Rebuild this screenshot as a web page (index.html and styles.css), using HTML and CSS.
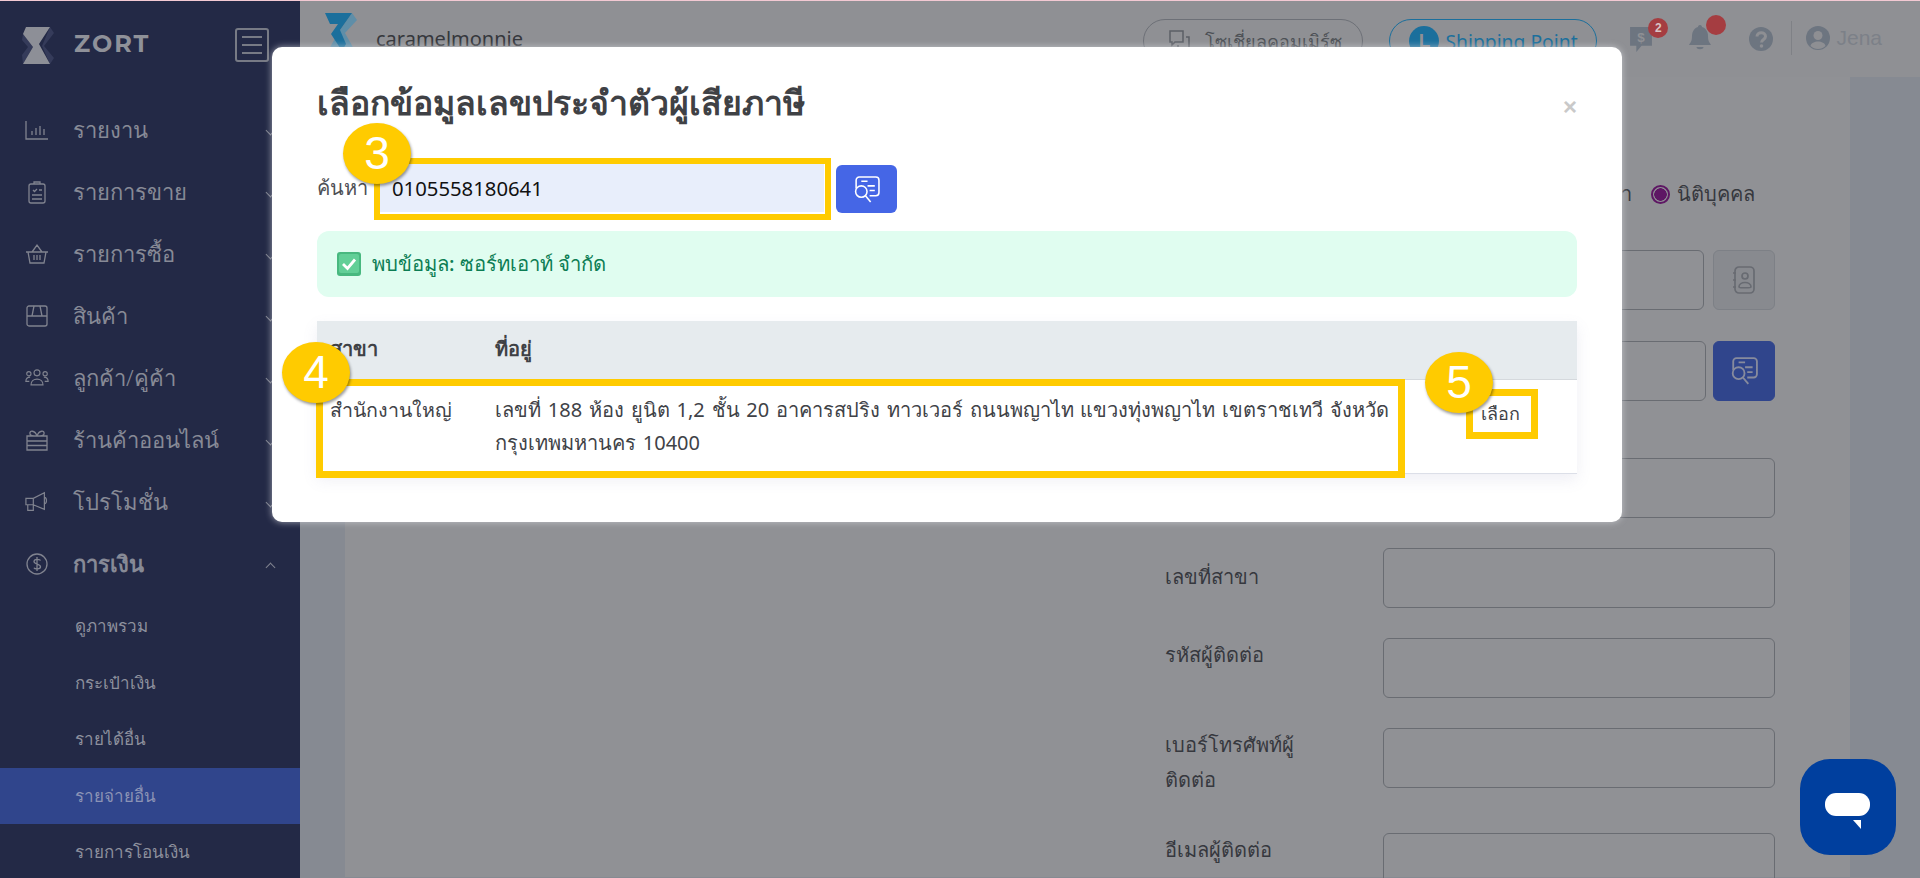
FILE: index.html
```html
<!DOCTYPE html>
<html lang="th">
<head>
<meta charset="utf-8">
<title>ZORT</title>
<link rel="stylesheet" href="styles.css">
</head>
<body>
<div class="app">
  <aside class="sidebar">
    <div class="brand">
      <svg class="brand-logo" viewBox="0 0 33 37"><path fill="#353b5a" d="M28 0l4 6-10 13 10 12-4 6-8-18zM1 7l-1 6 6 7-6 8 1 9 10-17z"/><path fill="#8d8f97" d="M4 0h24L17 17l11 20H1l10-17L1 7z"/></svg>
      <span class="brand-name">ZORT</span>
      <span class="burger"><i></i><i></i><i></i></span>
    </div>
    <nav class="nav">
      <a class="nav-item"><svg viewBox="0 0 24 24"><path d="M1 3v18h22M7 17v-4M11 17v-7M15 17v-9M19 17v-6"/></svg><span>รายงาน</span><b class="chev"></b></a>
      <a class="nav-item"><svg viewBox="0 0 24 24"><rect x="4" y="4" width="16" height="19" rx="2"/><path d="M9 4V2h6v2M8 10l1.500 1.500L12 9M14 10h3M7 15h10M7 19h10"/></svg><span>รายการขาย</span><b class="chev"></b></a>
      <a class="nav-item"><svg viewBox="0 0 24 24"><path d="M1 10h22M3 10l2 11h14l2-11M7 10l5-7 5 7M9 13v5M12 13v5M15 13v5"/></svg><span>รายการซื้อ</span><b class="chev"></b></a>
      <a class="nav-item"><svg viewBox="0 0 24 24"><rect x="2" y="2" width="20" height="20" rx="2"/><path d="M2 12h20M7 12l2-10M17 12l-2-10"/></svg><span>สินค้า</span><b class="chev"></b></a>
      <a class="nav-item"><svg viewBox="0 0 28 24"><circle cx="14" cy="6" r="3.500"/><circle cx="4.500" cy="7" r="2.500"/><circle cx="23.500" cy="7" r="2.500"/><path d="M7 20c0-9 14-9 14 0zM5 16H1c0-4 2-5 5-5M23 16h4c0-4-2-5-5-5"/></svg><span>ลูกค้า/คู่ค้า</span><b class="chev"></b></a>
      <a class="nav-item"><svg viewBox="0 0 24 24"><path d="M2 8h20v14H2zM2 13h20M2 17.500h20M12 8c-2-6-8-6-7-2 0 2 4 2 7 2zM12 8c2-6 8-6 7-2 0 2-4 2-7 2z"/></svg><span>ร้านค้าออนไลน์</span><b class="chev"></b></a>
      <a class="nav-item"><svg viewBox="0 0 26 24"><path d="M1 8h8l12-6v18L9 15H1zM9 8v7M3 15v6h6v-6M21 7c3 0 3 7 0 7"/></svg><span>โปรโมชั่น</span><b class="chev"></b></a>
      <a class="nav-item nav-open"><svg viewBox="0 0 24 24"><circle cx="12" cy="12" r="10"/><path d="M15.500 8.500C15 7 9 6.500 9 9.500c0 3.200 6.500 2 6.500 5.200 0 3-6 2.500-6.500 1M12 5v14"/></svg><span>การเงิน</span><b class="chev chev-up"></b></a>
      <a class="sub-item">ดูภาพรวม</a>
      <a class="sub-item">กระเป๋าเงิน</a>
      <a class="sub-item">รายได้อื่น</a>
      <a class="sub-item sub-active">รายจ่ายอื่น</a>
      <a class="sub-item">รายการโอนเงิน</a>
    </nav>
  </aside>

  <div class="main">
    <header class="topbar">
      <svg class="shop-logo" viewBox="0 0 32 38"><path fill="#5f8ea8" d="M27 0l5 7-12 13 10 18H3l10-18z"/><path fill="#1b6f9c" d="M0 0h27L15 17l6 14-4 7-11-17 7-10H5z"/></svg>
      <span class="shop-name">caramelmonnie</span>
      <span class="pill pill-social"><svg viewBox="0 0 24 24"><path d="M3 2h13v11H8l-3 3v-3H3zM19 8h3v11h-2v3l-3-3h-6v-3"/></svg>โซเชี่ยลคอมเมิร์ซ</span>
      <span class="pill pill-ship"><i class="ship-mark">L</i>Shipping Point</span>
      <span class="tool tool-msg"><svg viewBox="0 0 24 26"><path fill="#6d7580" d="M2 1h21v18H13l-5 6v-6H2z"/><text x="12.500" y="15" class="msg-sign">$</text></svg><em class="badge">2</em></span>
      <span class="tool tool-bell"><svg viewBox="0 0 24 28"><path fill="#6d7580" d="M12 0c1.500 0 2 1 2 2 4 1 6 5 6 9 0 6 2 7 3 9H1c1-2 3-3 3-9 0-4 2-8 6-9 0-1 .5-2 2-2zM8.500 22h7c0 3-7 3-7 0z"/></svg><em class="badge badge-dot"></em></span>
      <span class="tool tool-help"><svg viewBox="0 0 24 24"><circle cx="12" cy="12" r="12" fill="#6d7580"/><path d="M8 9.500c0-5 8.500-5 8.500 0 0 3-4 3-4 6" fill="none" stroke="#8e8f93" stroke-width="3"/><circle cx="12.500" cy="19" r="1.800" fill="#8e8f93"/></svg></span>
      <span class="user"><svg viewBox="0 0 24 24"><circle cx="12" cy="12" r="12" fill="#6d7580"/><circle cx="12" cy="9.500" r="4.500" fill="#8e8f93"/><path d="M4.500 20c1-6 14-6 15 0-4 4-11 4-15 0z" fill="#8e8f93"/></svg>Jena</span>
    </header>
    <section class="panel">
      <form class="form">
        <div class="radio-row"><span class="radio-off">บุคคลธรรมดา</span><i class="radio"></i><span>นิติบุคคล</span></div>
        <div class="row row-first"><label>เลขประจำตัว</label><div class="group"><span class="field"></span><span class="square"><svg viewBox="0 0 24 28"><rect x="3" y="1" width="19" height="26" rx="4"/><circle cx="13" cy="10" r="3"/><path d="M7 21c0-6 12-6 12 0 0 1-12 1-12 0zM1 7h3M1 14h3M1 21h3"/></svg></span></div></div>
        <div class="row row-second"><label>ชื่อ</label><div class="group group-tight"><span class="field"></span><span class="square square-blue"><svg viewBox="0 0 26 26"><path d="M3 12V4a3 3 0 0 1 3-3h16a3 3 0 0 1 3 3v12a3 3 0 0 1-3 3h-6M8 5h6M14 9.500h7M16 14h5"/><circle cx="8" cy="15" r="5.500"/><path d="M12 19l5 6"/></svg></span></div></div>
        <div class="row row-third"><label>ที่อยู่</label><span class="field"></span></div>
        <div class="row"><label class="label-mid">เลขที่สาขา</label><span class="field"></span></div>
        <div class="row"><label>รหัสผู้ติดต่อ</label><span class="field"></span></div>
        <div class="row"><label>เบอร์โทรศัพท์ผู้<br>ติดต่อ</label><span class="field"></span></div>
        <div class="row row-last"><label>อีเมลผู้ติดต่อ</label><span class="field"></span></div>
      </form>
    </section>
  </div>
</div>

<div class="modal">
  <button class="close" type="button">×</button>
  <h2 class="modal-title">เลือกข้อมูลเลขประจำตัวผู้เสียภาษี</h2>
  <div class="search">
    <label>ค้นหา</label>
    <input class="search-input" type="text" value="0105558180641">
    <button class="search-btn" type="button"><svg viewBox="0 0 26 26"><path d="M3 12V4a3 3 0 0 1 3-3h16a3 3 0 0 1 3 3v12a3 3 0 0 1-3 3h-6M8 5h6M14 9.500h7M16 14h5"/><circle cx="8" cy="15" r="5.500"/><path d="M12 19l5 6"/></svg></button>
  </div>
  <div class="alert">
    <svg viewBox="0 0 24 24"><rect x="0" y="0" width="24" height="24" rx="3" fill="#48b87f"/><rect x="2" y="2" width="20" height="19" rx="2" fill="#62cf97"/><path d="M6 12l4.500 4.500L18 7.500" fill="none" stroke="#fff" stroke-width="2.800"/></svg>
    <span>พบข้อมูล: ซอร์ทเอาท์ จำกัด</span>
  </div>
  <table class="table">
    <thead><tr><th class="col-branch">สาขา</th><th class="col-addr">ที่อยู่</th><th class="col-act"></th></tr></thead>
    <tbody><tr>
      <td>สำนักงานใหญ่</td>
      <td class="addr">เลขที่ 188 ห้อง ยูนิต 1,2 ชั้น 20 อาคารสปริง ทาวเวอร์ ถนนพญาไท แขวงทุ่งพญาไท เขตราชเทวี จังหวัด กรุงเทพมหานคร 10400</td>
      <td class="act"><button class="pick" type="button">เลือก</button></td>
    </tr></tbody>
  </table>
</div>

<div class="hl hl-input"></div>
<div class="hl hl-row"></div>
<div class="hl hl-pick"></div>
<div class="step step-3">3</div>
<div class="step step-4">4</div>
<div class="step step-5">5</div>

<div class="chat"><i class="chat-bubble"></i><i class="chat-tail"></i></div>
</body>
</html>
```

FILE: styles.css
```css
* { box-sizing: border-box; }
html, body { margin: 0; height: 878px; overflow: hidden; }
body { font-family: "Noto Sans", "Open Sans", sans-serif; background: #909195; position: relative; border-top: 1px solid #f3c9d3; color: #3a3c42; }
svg { display: block; }

.app { display: flex; height: 877px; overflow: hidden; }

.sidebar { width: 300px; flex: none; background: #232946; color: #878a96; }
.brand { height: 98px; display: flex; align-items: center; padding: 0 31px 10px 22px; }
.brand-logo { width: 33px; height: 37px; margin-right: 19px; flex: none; }
.brand-name { font: 700 24px "Montserrat", "Inter", sans-serif; letter-spacing: 2px; color: #8f9199; margin-top: -4px; }
.burger { margin-left: auto; width: 34px; height: 34px; border: 2px solid #777a85; border-radius: 3px; display: flex; flex-direction: column; justify-content: center; gap: 6px; padding: 0 5px; }
.burger i { height: 2px; background: #777a85; }

.nav-item { display: flex; align-items: center; height: 62px; padding-left: 25px; font-size: 22px; font-weight: 300; position: relative; }
.nav-item svg { width: 24px; height: 24px; margin-right: 24px; fill: none; stroke: #80838f; stroke-width: 1.300; flex: none; }
.nav-open { font-weight: 700; margin-bottom: 3px; }
.chev { position: absolute; left: 267px; top: 28px; width: 7px; height: 7px; border-right: 1px solid #80838f; border-bottom: 1px solid #80838f; transform: rotate(45deg); }
.chev-up { top: 31px; transform: rotate(225deg); }
.sub-item { display: block; height: 56.500px; line-height: 56px; padding-left: 75px; font-size: 17px; font-weight: 500; color: #8d909d; }
.sub-active { background: #30458c; color: #8b93b5; }

.main { flex: 1; min-width: 0; background: #868a92; }
.topbar { height: 76px; background: #8f9094; display: flex; align-items: flex-start; position: relative; padding: 12px 38px 0 24px; }
.shop-logo { width: 34px; height: 38px; margin-right: 18px; flex: none; }
.shop-name { font-size: 20px; color: #35373c; margin-top: 12px; margin-right: auto; }
.pill { height: 44px; border: 1px solid #6d7077; border-radius: 22px; display: flex; align-items: center; font-size: 18px; margin-top: 6px; white-space: nowrap; color: #4d5056; }
.pill svg { width: 24px; height: 24px; fill: none; stroke: #5c5f66; stroke-width: 1.500; margin-right: 14px; }
.pill-social { width: 220px; padding-left: 23px; margin-right: 26px; }
.pill-ship { width: 208px; padding-left: 19px; margin-right: 31px; border-color: #1b6f9c; color: #1b6f9c; font-size: 19.300px; }
.ship-mark { width: 30px; height: 30px; border-radius: 50%; background: #1b6f9c; color: #8f9094; font: 700 19px "Liberation Sans", sans-serif; display: flex; align-items: center; justify-content: center; margin-right: 6px; }
.tool { display: block; position: relative; flex: none; margin-top: 12px; }
.tool-msg { width: 25px; height: 28px; margin-top: 13px; margin-right: 35px; }
.tool-bell { width: 24px; height: 28px; margin-top: 12px; margin-right: 37px; }
.tool-help { width: 24px; height: 24px; margin-top: 14px; margin-right: 18px; }
.msg-sign { font: 700 13px "Liberation Sans", sans-serif; fill: #8f9094; text-anchor: middle; }
.badge { position: absolute; left: 20px; top: -8px; width: 20px; height: 20px; border-radius: 50%; background: #a53d41; color: #d9c4c5; font: 700 12px/20px "Liberation Sans", sans-serif; text-align: center; }
.badge-dot { left: 18px; top: -10px; }
.user { display: flex; align-items: center; height: 34px; margin-top: 8px; padding-left: 14px; border-left: 1px solid #7f8186; font-size: 21px; color: #7c8088; font-family: "Liberation Sans", sans-serif; }
.user svg { width: 24px; height: 24px; margin-right: 6px; }

.panel { height: 800px; margin-left: 45px; margin-right: 70px; background: #909195; display: flex; justify-content: flex-end; }
.form { width: 610px; margin-right: 75px; padding-top: 104px; font-size: 20px; color: #36383e; }
.radio-row { height: 26px; display: flex; align-items: center; justify-content: flex-end; margin-right: 20px; gap: 7px; line-height: 26px; margin-bottom: 43px; }
.radio-off { margin-right: 12px; }
.radio { width: 19px; height: 19px; border: 2px solid #5e1764; border-radius: 50%; background: radial-gradient(circle, #5e1764 0 6px, #909195 6.500px); }
.row { display: grid; grid-template-columns: 218px 392px; height: 60px; margin-bottom: 30px; align-items: start; }
.row label { display: block; line-height: 35px; margin: -1px 50px 0 0; }
.row .label-mid { margin-top: 11px; }
.row-first { margin-bottom: 31px; }
.row-second { margin-bottom: 57px; }
.row-last { margin-top: 45px; }
.field { display: block; height: 60px; border: 1px solid #696c72; border-radius: 6px; flex: 1; }
.group { display: flex; gap: 9px; }
.group-tight { gap: 7px; }
.square { width: 62px; height: 60px; flex: none; border: 1px solid #7d8086; border-radius: 6px; display: flex; align-items: center; justify-content: center; background: #888a8f; }
.square svg { width: 24px; height: 28px; fill: none; stroke: #686b72; stroke-width: 1.700; }
.square-blue { background: #30458c; border-color: #30458c; }
.square-blue svg { width: 28px; height: 28px; stroke: #878b9d; }

.modal { position: absolute; left: 272px; top: 46px; width: 1350px; height: 475px; background: #fff; border-radius: 10px; padding: 0 45px; box-shadow: 0 0 7px rgba(215, 216, 222, .7); }
.modal-title { margin: 0; padding-top: 31px; height: 117px; font-size: 33.800px; line-height: 48px; font-weight: 700; color: #3f4145; }
.close { position: absolute; left: 1291px; top: 48px; border: 0; background: none; padding: 0; font: 700 24px/24px "Liberation Sans", sans-serif; color: #c9c9c9; }
.search { display: flex; align-items: flex-start; height: 48px; }
.search label { width: 63px; font-size: 20px; line-height: 28px; margin-top: 10px; color: #4d4f55; white-space: nowrap; }
.search-input { width: 444px; height: 48px; border: 0; background: #e8eefb; padding: 0 12px; font: 20.300px "Noto Sans", sans-serif; color: #111; margin-right: 12px; outline: 0; }
.search-btn { width: 61px; height: 48px; margin-top: 1px; border: 0; border-radius: 6px; background: #4566e6; display: flex; align-items: center; justify-content: center; padding: 0; }
.search-btn svg { width: 27px; height: 27px; fill: none; stroke: #fff; stroke-width: 1.500; }
.alert { margin-top: 19px; height: 66px; border-radius: 12px; background: #e0fdf0; display: flex; align-items: center; padding-left: 20px; color: #0c7d54; font-size: 20.300px; font-weight: 500; }
.alert svg { width: 24px; height: 24px; margin-right: 11px; }
.table { margin-top: 24px; width: 1260px; border-collapse: collapse; table-layout: fixed; box-shadow: 0 6px 14px rgba(120, 125, 170, .12); }
.table th { height: 58px; background: #e6ebee; text-align: left; font-size: 20px; font-weight: 700; color: #3f4145; border-bottom: 1px solid #d5d9dd; padding: 0 0 2px 13px; }
.col-branch { width: 165px; }
.col-addr { width: 935px; padding-left: 13px; }
.table td { height: 94px; vertical-align: top; padding: 13px 0 0 13px; font-size: 19.600px; line-height: 33px; color: #404247; border-bottom: 1px solid #dcdfe8; }
.table .addr { font-size: 20px; word-spacing: 1.600px; }
.table .act { padding: 16px 0 0; text-align: center; }
.pick { border: 0; background: #fff; padding: 0; font: 18px/30px "Noto Sans", sans-serif; color: #404247; margin-left: 6px; }

.hl { position: absolute; border: 6px solid #ffcb00; }
.hl-input { left: 374px; top: 157px; width: 457px; height: 62px; }
.hl-row { left: 316px; top: 378px; width: 1089px; height: 99px; border-width: 7px; }
.hl-pick { left: 1466px; top: 388px; width: 72px; height: 50px; border-width: 7px; }
.step { position: absolute; width: 68px; height: 61px; border-radius: 50%; background: #ffcb00; color: #fff; font: 46px/61px "Liberation Sans", sans-serif; text-align: center; box-shadow: 1px 2px 3px rgba(0, 0, 0, .4); }
.step-3 { left: 343px; top: 122px; }
.step-4 { left: 282px; top: 341px; }
.step-5 { left: 1425px; top: 351px; }

.chat { position: absolute; left: 1800px; top: 758px; width: 96px; height: 96px; border-radius: 30px; background: #003f9e; }
.chat-bubble { position: absolute; left: 25px; top: 34px; width: 45px; height: 23px; background: #fff; border-radius: 11px; }
.chat-tail { position: absolute; left: 53px; top: 61px; width: 8px; height: 9px; background: #fff; clip-path: polygon(0 0, 100% 0, 100% 100%); }
```
